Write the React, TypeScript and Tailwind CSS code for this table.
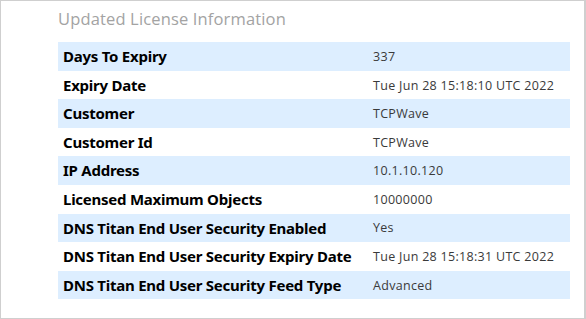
const rows: [string, string][] = [
  ["Days To Expiry", "337"],
  ["Expiry Date", "Tue Jun 28 15:18:10 UTC 2022"],
  ["Customer", "TCPWave"],
  ["Customer Id", "TCPWave"],
  ["IP Address", "10.1.10.120"],
  ["Licensed Maximum Objects", "10000000"],
  ["DNS Titan End User Security Enabled", "Yes"],
  ["DNS Titan End User Security Expiry Date", "Tue Jun 28 15:18:31 UTC 2022"],
  ["DNS Titan End User Security Feed Type", "Advanced"],
];

export default function App() {
  return (
    <div className="w-[586px] h-[319px] bg-white border border-[#cfcfcf] border-r-2 box-border">
      <div className="pl-[57px] pr-[14px] pt-[7px]">
        <h2 className="text-[16.5px] leading-[22px] text-[#a3a3a3] font-['Open_Sans',sans-serif] tracking-[0.15px]">
          Updated License Information
        </h2>
        <div className="mt-[12px]">
          {rows.map(([label, value], i) => (
            <div
              key={label}
              className={`flex items-center h-[28.6px] ${i % 2 === 0 ? "bg-[#ddeeff]" : "bg-white"}`}
            >
              <div className="w-[315px] pl-[5px] text-[15px] font-bold text-black font-['Noto_Sans',sans-serif] tracking-[-0.25px]">
                {label}
              </div>
              <div className="pt-[2px] text-[12.5px] text-[#3a3a3a] font-['Open_Sans',sans-serif] tracking-[0.3px]">{value}</div>
            </div>
          ))}
        </div>
      </div>
    </div>
  );
}
